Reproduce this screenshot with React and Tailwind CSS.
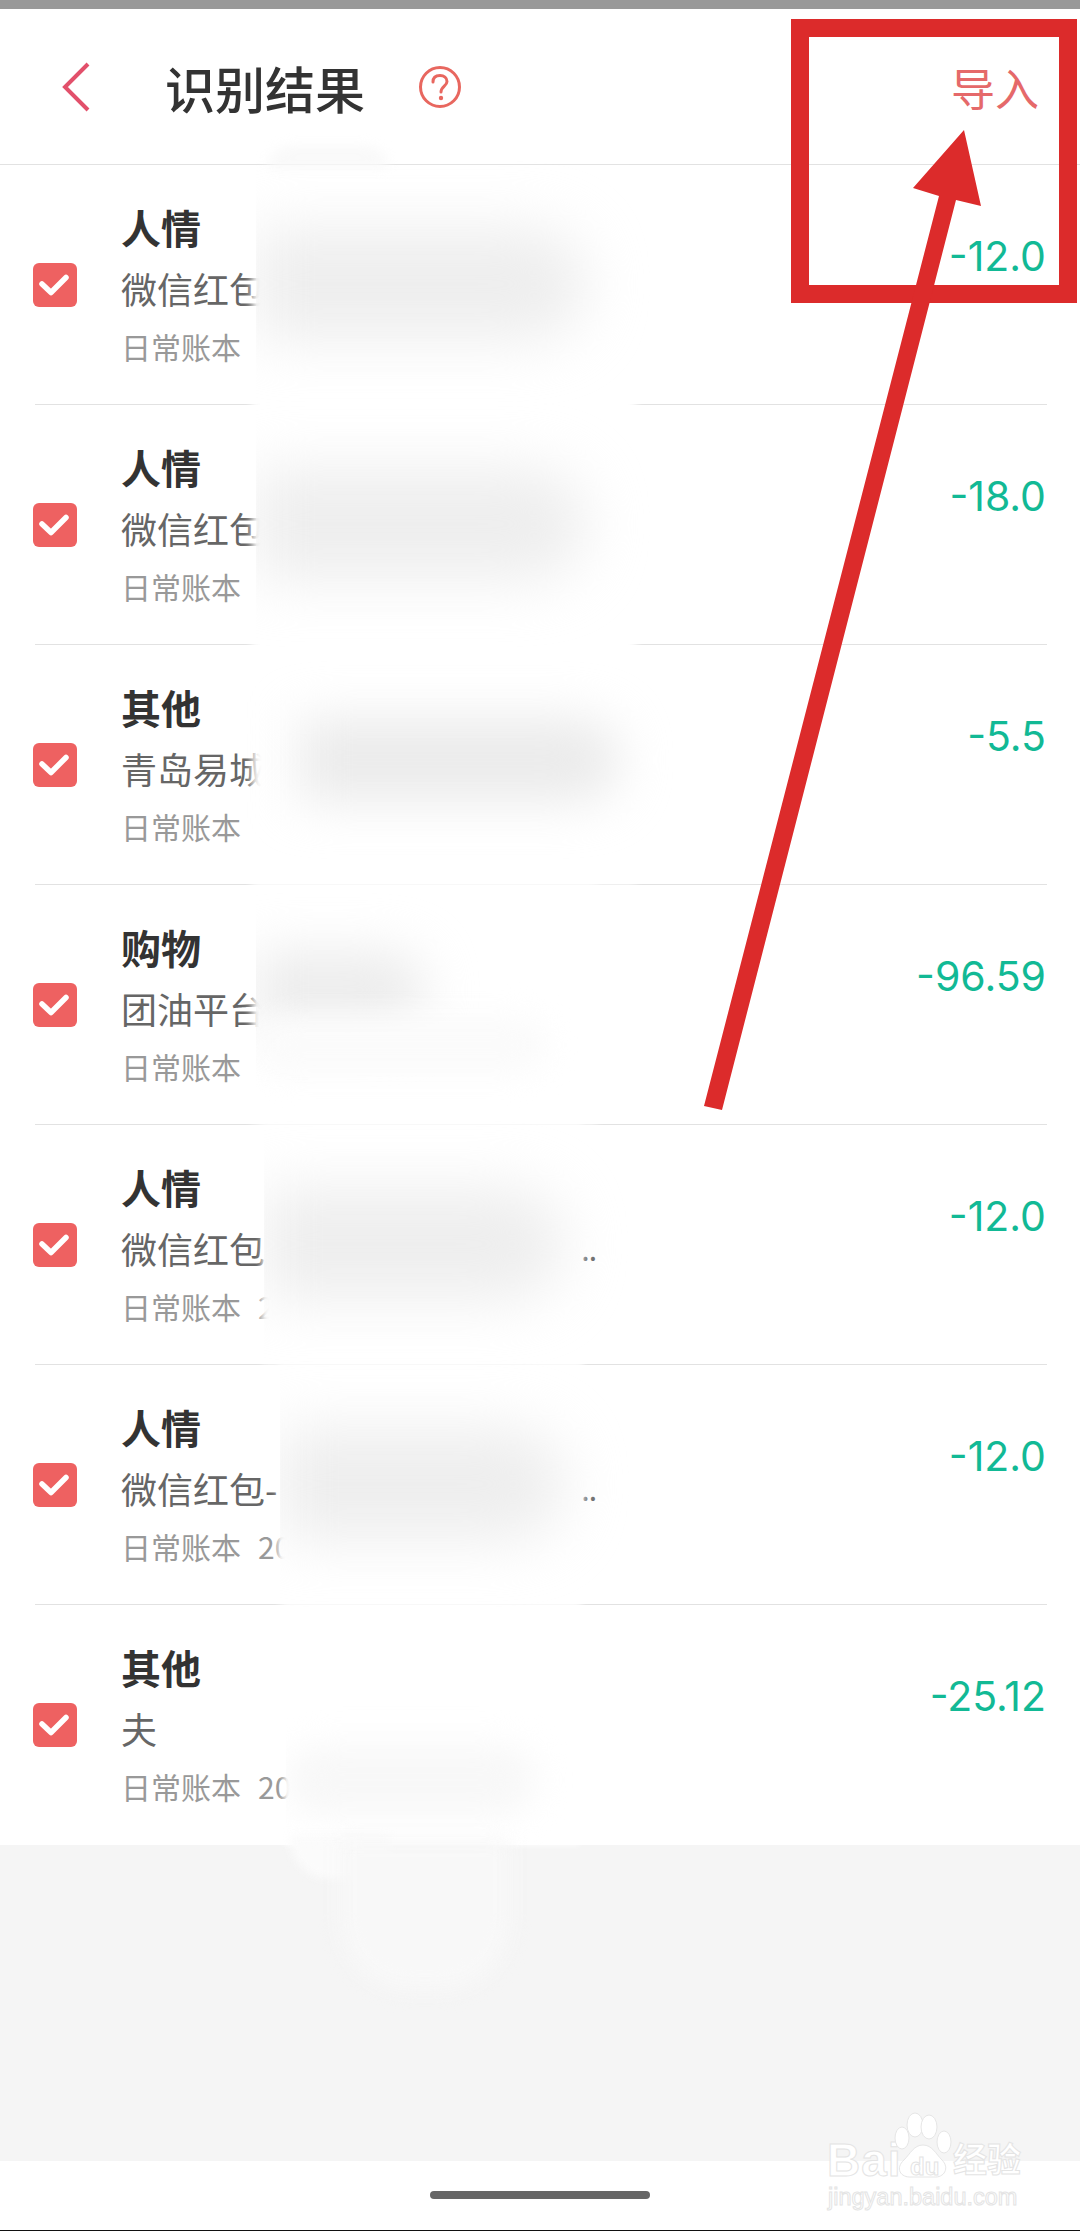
import React from "react";

const rows = [
  { title: "人情", sub: "微信红包", meta: "日常账本", amount: "-12.0" },
  { title: "人情", sub: "微信红包", meta: "日常账本", amount: "-18.0" },
  { title: "其他", sub: "青岛易城", meta: "日常账本", amount: "-5.5" },
  { title: "购物", sub: "团油平台", meta: "日常账本", amount: "-96.59" },
  { title: "人情", sub: "微信红包", meta: "日常账本", year: "2", dots: true, amount: "-12.0" },
  { title: "人情", sub: "微信红包-", meta: "日常账本", year: "20", dots: true, amount: "-12.0" },
  { title: "其他", sub: "夫", meta: "日常账本", year: "20", amount: "-25.12" },
];

// the white smears and grey shadows that hide private text in the screenshot
const smears = [
  "left-[252px] top-[172px] w-[384px] h-[712px] bg-white blur-[4px]",
  "left-[252px] top-[884px] w-[345px] h-[240px] bg-white blur-[4px]",
  "left-[262px] top-[1124px] w-[320px] h-[240px] bg-white blur-[3px]",
  "left-[278px] top-[1364px] w-[305px] h-[240px] bg-white blur-[3px]",
  "left-[284px] top-[1604px] w-[295px] h-[241px] bg-white blur-[3px]",
  "left-[290px] top-[1835px] w-[100px] h-[44px] rounded-bl-[40px] bg-[#fbfbfb] blur-[5px]",
  "left-[340px] top-[1840px] w-[170px] h-[150px] rounded-b-[70px] bg-[#f8f8f8] blur-[10px]",
  "left-[268px] top-[146px] w-[120px] h-[22px] rounded-t-full bg-[#f9f9f9] blur-[6px]",
  "left-[256px] top-[228px] w-[330px] h-[112px] rounded-r-full bg-[#eeeeee] blur-[28px] [clip-path:inset(-90px_-90px_-90px_0)]",
  "left-[256px] top-[468px] w-[330px] h-[112px] rounded-r-full bg-[#eeeeee] blur-[28px] [clip-path:inset(-90px_-90px_-90px_0)]",
  "left-[300px] top-[718px] w-[320px] h-[84px] rounded-r-full bg-[#ebebeb] blur-[24px]",
  "left-[256px] top-[950px] w-[170px] h-[80px] rounded-r-full bg-[#ededed] blur-[24px] [clip-path:inset(-90px_-90px_-90px_0)]",
  "left-[256px] top-[1015px] w-[290px] h-[60px] rounded-full bg-[#fbfbfb] blur-[14px] [clip-path:inset(-90px_-90px_-90px_0)]",
  "left-[264px] top-[1188px] w-[300px] h-[112px] rounded-r-full bg-[#eeeeee] blur-[28px] [clip-path:inset(-90px_-90px_-90px_0)]",
  "left-[280px] top-[1428px] w-[285px] h-[112px] rounded-r-full bg-[#eeeeee] blur-[28px] [clip-path:inset(-90px_-90px_-90px_0)]",
  "left-[286px] top-[1745px] w-[250px] h-[70px] rounded-full bg-[#f8f8f8] blur-[16px] [clip-path:inset(-90px_-90px_-90px_0)]",
];

const Row = ({ row, last }) => (
  <>
    <div className="flex items-center h-[239px] pl-[33px] pr-[34px] bg-white">
      <div className="w-[44px] h-[44px] rounded-[6px] bg-[#ee6161] flex items-center justify-center shrink-0">
        <svg width="44" height="44" viewBox="0 0 44 44" fill="none">
          <path d="M9 21 L18 29.5 L33 14.5" stroke="#fff" strokeWidth="5.5" strokeLinecap="round" strokeLinejoin="round" />
        </svg>
      </div>
      <div className="ml-[44px] flex-1 self-start pt-[37px]">
        <div className="text-[40px] leading-[50px] font-bold text-[#333]">{row.title}</div>
        <div className="mt-[11px] flex justify-between w-[475px] text-[36px] leading-[50px] text-[#666]">
          <span>{row.sub}</span>
          {row.dots && <span className="text-[30px] tracking-[-1px]">..</span>}
        </div>
        <div className="mt-[8px] text-[30px] leading-[50px] text-[#999]">
          {row.meta}
          {row.year && <span className="ml-[17px]">{row.year}</span>}
        </div>
      </div>
      <div className="self-start mt-[66px] text-[41px] leading-[50px] font-normal text-[#12b995] font-['Inter',sans-serif]">{row.amount}</div>
    </div>
    <div className={last ? "h-px bg-white" : "h-px ml-[35px] mr-[33px] bg-[#e2e2e2]"} />
  </>
);

const Watermark = () => (
  <div className="absolute left-[825px] top-[2110px] w-[200px] h-[100px] text-white font-bold font-['Liberation_Sans','Noto_Sans_CJK_SC',sans-serif] [-webkit-text-stroke:1px_#e4e4e4]">
    <div className="absolute left-[2px] top-[27px] text-[46px] leading-[46px] tracking-[1px]">Bai</div>
    <svg className="absolute left-[65px] top-0" width="70" height="80" viewBox="0 0 70 80" fill="#fff" stroke="#e6e6e6" strokeWidth="1">
      <ellipse cx="25" cy="15" rx="8" ry="12" />
      <ellipse cx="39" cy="17" rx="8" ry="12" />
      <ellipse cx="12" cy="28" rx="7" ry="11" />
      <ellipse cx="54" cy="32" rx="7" ry="11" />
      <path d="M33 35 C42 35 46 44 52 50 C60 58 54 68 44 67 H22 C10 68 5 58 14 50 C20 44 24 35 33 35 Z" />
    </svg>
    <div className="absolute left-[85px] top-[44px] text-[24px] leading-[26px]">du</div>
    <div className="absolute left-[128px] top-[32px] text-[34px] leading-[36px]">经验</div>
    <div className="absolute left-[3px] top-[74px] text-[23.5px] leading-[26px] font-normal">jingyan.baidu.com</div>
  </div>
);

export default function App() {
  return (
    <div className="relative w-[1080px] h-[2231px] overflow-hidden bg-white font-['Noto_Sans_CJK_SC','Noto_Sans',sans-serif]">
      <div className="h-[9px] bg-[#999]" />

      <header className="flex items-center h-[156px] bg-white border-b border-[#e2e2e2] pl-[60px] pr-[41px]">
        <svg width="32" height="52" viewBox="0 0 32 52" fill="none" className="shrink-0">
          <path d="M28 3 L5 26 L28 49" stroke="#e2506b" strokeWidth="4" />
        </svg>
        <h1 className="ml-[73px] text-[50px] leading-[60px] font-medium text-[#333]">识别结果</h1>
        <svg width="44" height="44" viewBox="0 0 44 44" fill="none" className="ml-[53px] shrink-0">
          <circle cx="22" cy="22" r="19.5" stroke="#e8675f" strokeWidth="3" />
          <path d="M15 17 C15 12.5 18 10.5 22 10.5 C26 10.5 29 13 29 16.5 C29 21 23 21.5 23 27" stroke="#e8675f" strokeWidth="3" strokeLinecap="round" />
          <circle cx="23" cy="33" r="2.2" fill="#e8675f" />
        </svg>
        <span className="ml-auto text-[44px] leading-[50px] text-[#e5696a]">导入</span>
      </header>

      <main>
        {rows.map((row, i) => (
          <Row key={i} row={row} last={i === rows.length - 1} />
        ))}
      </main>

      <div className="h-[316px] bg-[#f5f5f5]" />

      <footer className="h-[70px] bg-white flex flex-col items-center">
        <div className="mt-[30px] w-[220px] h-[8px] rounded-full bg-[#666]" />
        <div className="mt-auto w-full h-px bg-[#111]" />
      </footer>

      {smears.map((cls, i) => (
        <div key={i} className={`absolute ${cls}`} />
      ))}

      <Watermark />

      {/* red annotation drawn over the screenshot */}
      <div className="absolute left-[791px] top-[19px] w-[286px] h-[284px] border-[18.5px] border-[#dc2b2b]" />
      <svg className="absolute left-0 top-0" width="1080" height="2231" fill="#dc2b2b">
        <path d="M964 130 L981 206 L956 200 L722 1110 L704 1106 L939 196 L913 188 Z" />
      </svg>
    </div>
  );
}
